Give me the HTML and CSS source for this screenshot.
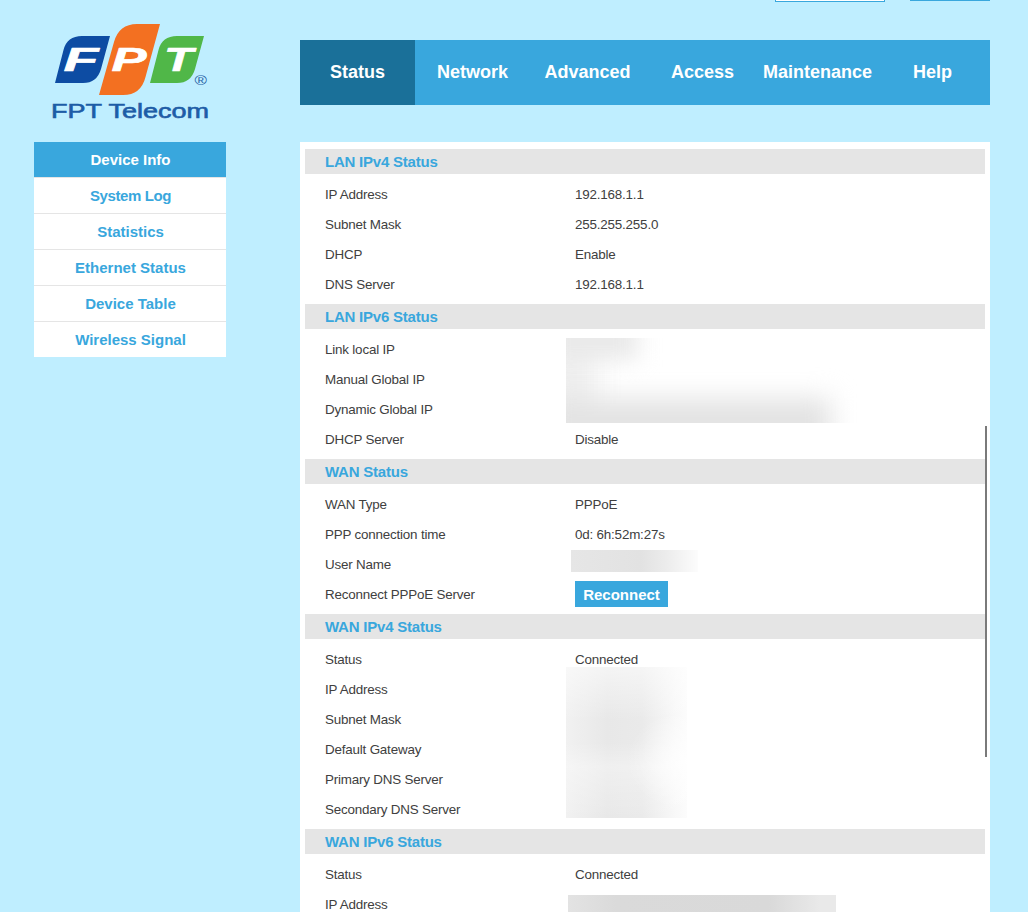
FILE: index.html
```html
<!DOCTYPE html>
<html lang="en">
<head>
<meta charset="utf-8">
<title>FPT Telecom - Device Info</title>
<link rel="stylesheet" href="styles.css">
</head>
<body>
<div class="page">
  <aside class="side">
    <svg class="logo" viewBox="0 0 192 142" role="img" aria-label="FPT Telecom">
      <path fill="#0d4ca3" d="M21 83L29.500 50Q33 36 48 36H76L67 69Q63 83 49 83Z"/>
      <path fill="#f37021" d="M65 95L80 42Q85 24 103 24H126L111.500 77Q107 95 89 95Z"/>
      <path fill="#50b748" d="M116 83L124.500 50Q128 36 143 36H170L161 69Q157 83 143 83Z"/>
      <g class="logo-letter">
        <text x="29.500" y="71" textLength="35" lengthAdjust="spacingAndGlyphs">F</text>
        <text x="77.500" y="71" textLength="35" lengthAdjust="spacingAndGlyphs">P</text>
        <text x="130" y="71" textLength="29" lengthAdjust="spacingAndGlyphs">T</text>
      </g>
      <text class="logo-mark" x="160.500" y="84.500" textLength="12.500" lengthAdjust="spacingAndGlyphs">®</text>
      <text class="logo-name" x="17" y="118" textLength="158" lengthAdjust="spacingAndGlyphs">FPT Telecom</text>
    </svg>
    <nav class="menu">
      <a class="menu-item active">Device Info</a>
      <a class="menu-item tight">System Log</a>
      <a class="menu-item">Statistics</a>
      <a class="menu-item">Ethernet Status</a>
      <a class="menu-item">Device Table</a>
      <a class="menu-item">Wireless Signal</a>
    </nav>
  </aside>
  <main class="main">
    <div class="topbar"><span class="select"></span><span class="logout"></span></div>
    <nav class="tabs">
      <a class="tab active">Status</a>
      <a class="tab">Network</a>
      <a class="tab">Advanced</a>
      <a class="tab">Access</a>
      <a class="tab">Maintenance</a>
      <a class="tab">Help</a>
    </nav>
    <div class="panel">
      <section>
        <h2>LAN IPv4 Status</h2>
        <dl>
          <dt>IP Address</dt><dd>192.168.1.1</dd>
          <dt>Subnet Mask</dt><dd>255.255.255.0</dd>
          <dt>DHCP</dt><dd>Enable</dd>
          <dt>DNS Server</dt><dd>192.168.1.1</dd>
        </dl>
      </section>
      <section>
        <h2>LAN IPv6 Status</h2>
        <dl>
          <dt>Link local IP</dt><dd></dd>
          <dt>Manual Global IP</dt><dd></dd>
          <dt>Dynamic Global IP</dt><dd></dd>
          <dt>DHCP Server</dt><dd>Disable</dd>
        </dl>
        <div class="mask mask-lan"><i class="m-side"></i><i class="m-top"></i><i class="m-bottom"></i></div>
      </section>
      <section>
        <h2>WAN Status</h2>
        <dl>
          <dt>WAN Type</dt><dd>PPPoE</dd>
          <dt>PPP connection time</dt><dd>0d: 6h:52m:27s</dd>
          <dt>User Name</dt><dd></dd>
          <dt>Reconnect PPPoE Server</dt><dd><button class="reconnect">Reconnect</button></dd>
        </dl>
        <div class="mask mask-user"></div>
      </section>
      <section>
        <h2>WAN IPv4 Status</h2>
        <dl>
          <dt>Status</dt><dd>Connected</dd>
          <dt>IP Address</dt><dd></dd>
          <dt>Subnet Mask</dt><dd></dd>
          <dt>Default Gateway</dt><dd></dd>
          <dt>Primary DNS Server</dt><dd></dd>
          <dt>Secondary DNS Server</dt><dd></dd>
        </dl>
        <div class="mask mask-wan"></div>
      </section>
      <section>
        <h2>WAN IPv6 Status</h2>
        <dl>
          <dt>Status</dt><dd>Connected</dd>
          <dt>IP Address</dt><dd></dd>
        </dl>
        <div class="mask mask-ipv6"></div>
      </section>
      <span class="scrollbar"></span>
    </div>
  </main>
</div>
</body>
</html>
```
FILE: styles.css
```css
* { box-sizing: border-box; }
body {
  margin: 0;
  height: 912px;
  overflow: hidden;
  background: #bfeeff;
  color: #404040;
  font: 13.4px/31px "Liberation Sans", Arial, sans-serif;
}
.page { display: flex; gap: 74px; padding-left: 34px; }
.side { width: 192px; }
.logo { display: block; width: 192px; height: 142px; }
.logo-letter text { fill: #fff; font: italic bold 33px "Liberation Sans", Arial, sans-serif; }
.logo-letter { stroke: #fff; stroke-width: .6; stroke-linejoin: round; }
.logo-mark { fill: #2661a5; font: 13px "Liberation Sans", Arial, sans-serif; }
.logo-name { fill: #1d5ca6; stroke: #1d5ca6; stroke-width: .6; font: 20px "Liberation Sans", Arial, sans-serif; }
.menu { background: #fff; }
.menu-item {
  display: block;
  height: 36px;
  padding-left: 1px;
  border-bottom: 1px solid #e5e5e5;
  color: #39a7dd;
  font-size: 15px;
  font-weight: bold;
  line-height: 36px;
  text-align: center;
}
.menu-item.tight { letter-spacing: -.4px; }
.menu-item:last-child { height: 35px; border-bottom: 0; }
.menu-item.active { background: #39a7dd; color: #fff; }
.main { width: 690px; }
.topbar { display: flex; justify-content: flex-end; align-items: flex-start; gap: 25px; height: 40px; }
.select { width: 110px; height: 2px; background: #fff; border: 1px solid #39a7dd; border-top: 0; }
.logout { width: 80px; height: 1px; background: #39a7dd; }
.tabs { display: grid; grid-template-columns: repeat(6, 1fr); height: 65px; background: #39a7dd; }
.tab { color: #fff; font-size: 18px; font-weight: bold; line-height: 64px; text-align: center; }
.tab.active { background: #1a7099; }
.panel { position: relative; height: 780px; margin-top: 37px; padding: 7px 5px 0; background: #fff; }
section { position: relative; }
h2 {
  height: 25px;
  margin: 0;
  padding-left: 20px;
  background: #e5e5e5;
  color: #39a7dd;
  font-size: 15px;
  line-height: 25px;
  letter-spacing: -.22px;
}
dl {
  display: grid;
  grid-template-columns: 250px 1fr;
  grid-auto-rows: 30px;
  margin: 0;
  padding: 5px 0 5px 20px;
  letter-spacing: -.19px;
}
dd { margin: 0; }
.reconnect {
  display: block;
  width: 93px;
  height: 26px;
  margin-top: 2px;
  padding: 1px 0 0;
  border: 0;
  background: #39a7dd;
  color: #fff;
  font: bold 15px/25px "Liberation Sans", Arial, sans-serif;
}
.mask { position: absolute; overflow: hidden; }
.mask i { position: absolute; }
.mask-lan { left: 261px; top: 34px; width: 295px; height: 85px; }
.m-side { left: -20px; top: 0; width: 50px; height: 95px; background: #efefef; filter: blur(14px); }
.m-top { left: -20px; top: -20px; width: 92px; height: 42px; background: #e9e9e9; filter: blur(11px); }
.m-bottom { left: -20px; top: 60px; width: 285px; height: 55px; background: #e3e3e3; filter: blur(13px); }
.mask-user { left: 266px; top: 91px; width: 127px; height: 22px; background: linear-gradient(90deg, #e6e6e6, #e2e2e2 55%, #ececec 75%, #fcfcfc); }
.mask-wan {
  left: 261px;
  top: 53px;
  width: 121px;
  height: 151px;
  background:
    radial-gradient(ellipse 60px 50px at 100% 62%, #fffc, transparent),
    linear-gradient(#fff8, transparent 35%, transparent 50%, #fff5 66%, transparent),
    linear-gradient(90deg, #f1f1f1, #e8e8e8 34%, #eaeaea 63%, #f8f8f8 90%, #fcfcfc);
}
.mask-ipv6 { left: 263px; top: 66px; width: 268px; height: 30px; background: linear-gradient(90deg, #e3e3e3, #dadada 18%, #d9d9d9 75%, #e9e9e9 94%); }
.scrollbar { position: absolute; left: 685px; top: 284px; width: 2px; height: 331px; background: #7a7a7a; }
```
